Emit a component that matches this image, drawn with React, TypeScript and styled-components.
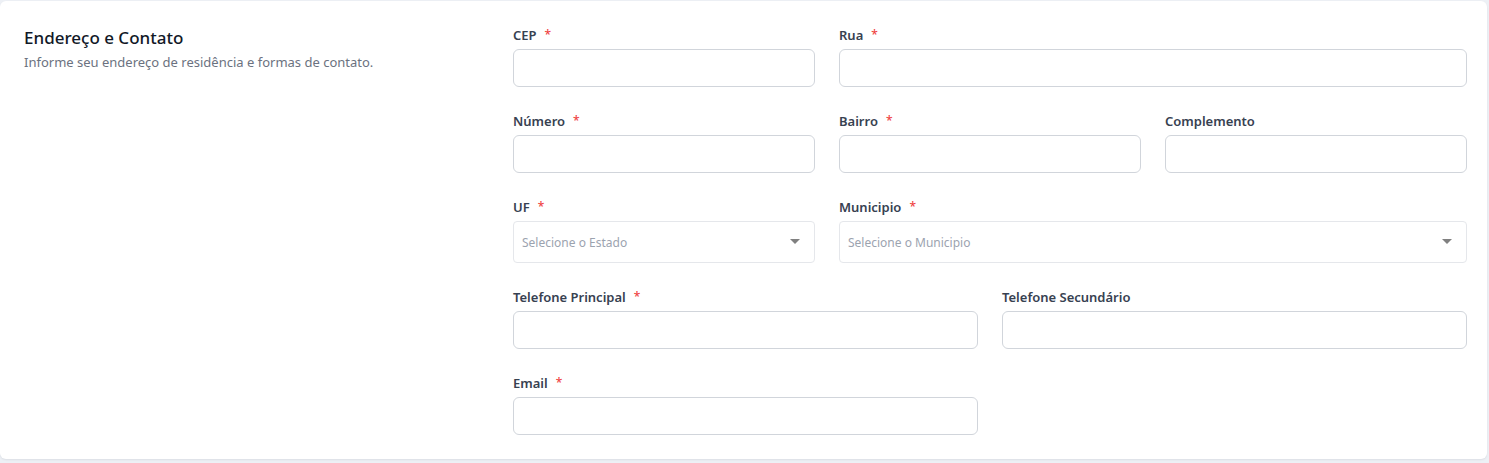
import React from "react";
import styled, { createGlobalStyle } from "styled-components";

const GlobalStyle = createGlobalStyle`
  * { box-sizing: border-box; }
  body {
    margin: 0;
    background: #edf0f5;
    font-family: "Noto Sans", "Open Sans", Arial, sans-serif;
  }
`;

const Page = styled.div`
  padding: 1px 2px 4px 0;
`;

const Card = styled.section`
  background: #ffffff;
  border-radius: 6px;
  box-shadow: 0 1px 2px rgba(16, 24, 40, 0.08);
  padding: 24px 20px 24px 24px;
  display: grid;
  grid-template-columns: 465px 954px;
  column-gap: 24px;
`;

const Intro = styled.div`
  display: flex;
  flex-direction: column;
  gap: 3px;
  padding-top: 1px;
`;

const Title = styled.h2`
  margin: 0;
  font-size: 17px;
  line-height: 24px;
  font-weight: 500;
  color: #111827;
`;

const Subtitle = styled.p`
  margin: 0;
  font-size: 13px;
  line-height: 18px;
  color: #6b7280;
`;

const FormGrid = styled.div`
  display: grid;
  grid-template-columns: repeat(6, 1fr);
  column-gap: 24px;
  row-gap: 24px;
`;

const Field = styled.div<{ $span: number }>`
  grid-column: span ${(p) => p.$span};
  display: flex;
  flex-direction: column;
  gap: 4px;
`;

const Label = styled.label`
  font-size: 13px;
  line-height: 20px;
  font-weight: 600;
  color: #374151;
  display: flex;
  align-items: center;
`;

const Required = styled.span`
  color: #ef4444;
  margin-left: 8px;
  font-size: 12px;
  font-weight: 500;
`;

const Input = styled.input`
  height: 38px;
  width: 100%;
  border: 1px solid #d1d5db;
  border-radius: 6px;
  background: #fff;
  padding: 0 10px;
  font-family: inherit;
  font-size: 13px;
  outline: none;
`;

const Select = styled.div`
  height: 42px;
  border: 1px solid #e5e7eb;
  border-radius: 4px;
  background: #fff;
  display: flex;
  align-items: center;
  justify-content: space-between;
  padding: 0 14px 0 8px;
  font-size: 12px;
  color: #9ca3af;
  cursor: pointer;
`;

const Caret = styled.span`
  width: 0;
  height: 0;
  border-left: 5px solid transparent;
  border-right: 5px solid transparent;
  border-top: 5px solid #808080;
  margin-top: -2px;
`;

type FieldDef = {
  label: string;
  span: number;
  required?: boolean;
  select?: string;
};

const fields: FieldDef[] = [
  { label: "CEP", span: 2, required: true },
  { label: "Rua", span: 4, required: true },
  { label: "Número", span: 2, required: true },
  { label: "Bairro", span: 2, required: true },
  { label: "Complemento", span: 2 },
  { label: "UF", span: 2, required: true, select: "Selecione o Estado" },
  { label: "Municipio", span: 4, required: true, select: "Selecione o Municipio" },
  { label: "Telefone Principal", span: 3, required: true },
  { label: "Telefone Secundário", span: 3 },
  { label: "Email", span: 3, required: true },
];

export default function App() {
  return (
    <Page>
      <GlobalStyle />
      <Card>
        <Intro>
          <Title>Endereço e Contato</Title>
          <Subtitle>Informe seu endereço de residência e formas de contato.</Subtitle>
        </Intro>
        <FormGrid>
          {fields.map((f) => (
            <Field key={f.label} $span={f.span}>
              <Label>
                {f.label}
                {f.required && <Required>*</Required>}
              </Label>
              {f.select ? (
                <Select>
                  {f.select}
                  <Caret />
                </Select>
              ) : (
                <Input type="text" />
              )}
            </Field>
          ))}
        </FormGrid>
      </Card>
    </Page>
  );
}
